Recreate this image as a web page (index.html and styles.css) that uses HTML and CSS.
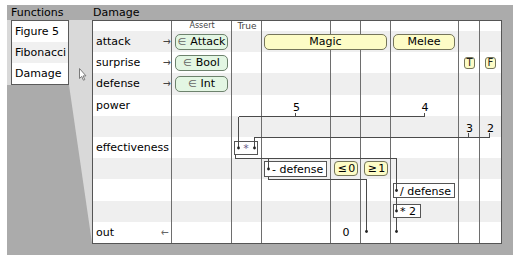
FILE: index.html
```html
<!DOCTYPE html>
<html lang="en">
<head>
  <meta charset="UTF-8">
  <title>Damage</title>
  <link rel="stylesheet" href="styles.css">
</head>
<body>
  <div class="stage">
    <div class="fn-panel">
      <div class="panel-title">Functions</div>
      <div class="fn-wrap">
        <div class="fn-list">
          <div class="fn-item">Figure 5</div>
          <div class="fn-item alt">Fibonacci</div>
          <div class="fn-item">Damage</div>
        </div>
      </div>
    </div>

    <!-- lens from the selected function to its table -->
    <svg class="lens" width="23" height="250" viewBox="0 0 23 250">
      <polygon points="0,15 23,15 23,238 0,80" fill="#d9d9d9"/>
      <path d="M10.5 63.5 V73.5 L12.7 71.4 L14.4 75.2 L15.8 74.6 L14.1 70.9 H17 Z" fill="#fff" stroke="#7a7a7a" stroke-linejoin="round"/>
    </svg>

    <div class="main-panel">
      <div class="panel-title">Damage</div>
      <div class="table-wrap">
        <div class="table">
          <div class="band alt r2"></div>
          <div class="band r3"></div>
          <div class="band alt r4"></div>
          <div class="band r5"></div>
          <div class="band alt r6"></div>
          <div class="band r7"></div>
          <div class="band alt r8"></div>
          <div class="band r9"></div>
          <div class="band alt r10"></div>
          <div class="band r11"></div>

          <div class="vline c1"></div>
          <div class="vline c2"></div>
          <div class="vline c3"></div>
          <div class="vline c4"></div>
          <div class="vline c5"></div>
          <div class="vline c6"></div>
          <div class="vline c7"></div>
          <div class="vline c8"></div>

          <div class="hdr r1 c2">Assert</div>
          <div class="hdr true r1 c3">True</div>

          <div class="label r2 c1"><span>attack</span><span class="arrow">→</span></div>
          <div class="label r3 c1"><span>surprise</span><span class="arrow">→</span></div>
          <div class="label r4 c1"><span>defense</span><span class="arrow">→</span></div>
          <div class="label r5 c1"><span>power</span></div>
          <div class="label r7 c1"><span>effectiveness</span></div>
          <div class="label r11 c1"><span>out</span><span class="arrow back">←</span></div>

          <div class="pill set r2 c2"><span class="in">∈</span>Attack</div>
          <div class="pill set r3 c2"><span class="in">∈</span>Bool</div>
          <div class="pill set r4 c2"><span class="in">∈</span>Int</div>

          <div class="pill case r2 c4-6">Magic</div>
          <div class="pill case r2 c7">Melee</div>
          <div class="chip r3 c8">T</div>
          <div class="chip r3 c9">F</div>

          <div class="num r5 c4">5</div>
          <div class="num r5 c7">4</div>
          <div class="num r6 c8">3</div>
          <div class="num r6 c9">2</div>

          <div class="pill case cond r8 c5">≤ 0</div>
          <div class="pill case cond r8 c6">≥ 1</div>

          <div class="num mid r11 c5">0</div>
        </div>

        <svg class="wires" width="410" height="224" viewBox="92 20 410 224">
          <g class="boxes">
            <rect x="234.5" y="141.5" width="23" height="13"/>
            <rect x="264.5" y="161.5" width="62" height="15"/>
            <rect x="393.5" y="183.5" width="61" height="14"/>
            <rect x="393.5" y="204.5" width="27" height="13"/>
          </g>
          <g class="lines">
            <path d="M238.5 116.5 H424.5 M295.5 113 V116.5 M424.5 113 V116.5 M238.5 116.5 V148"/>
            <path d="M254.5 148 V137.5 H489.5 M468.5 132.5 V137.5 M489.5 132.5 V137.5"/>
            <path d="M235.5 154.5 V158.5 H396.5 V190.5 M268.5 158.5 V169"/>
            <path d="M268.5 176.5 V179.5 H366.5 V231.5"/>
            <path d="M396.5 197.5 V211 M396.5 217.5 V231.5"/>
          </g>
          <g class="dots">
            <circle cx="238.5" cy="148" r="1.4"/>
            <circle cx="254.5" cy="148" r="1.4"/>
            <circle cx="268.5" cy="169" r="1.4"/>
            <circle cx="396.5" cy="190.5" r="1.4"/>
            <circle cx="396.5" cy="211" r="1.4"/>
            <circle cx="366.5" cy="231.5" r="1.4"/>
            <circle cx="396.5" cy="231.5" r="1.4"/>
          </g>
          <text class="op" x="246" y="152">*</text>
          <text class="box-text" x="272" y="173">- defense</text>
          <text class="box-text" x="400" y="194.5">/ defense</text>
          <text class="box-text" x="400" y="215">* 2</text>
        </svg>
      </div>
    </div>
  </div>
</body>
</html>
```

FILE: styles.css
```css
body{
  margin: 0;
  background: #fff;
  font-family: "DejaVu Sans", Verdana, sans-serif;
  font-size: 11px;
  color: #000;
}
.stage{
  display: flex;
  margin: 5px 0 0 7px;
  height: 250px;
  background: #ababab;
}
.panel-title{
  height: 15px;
  line-height: 16px;
  padding-left: 4px;
}
.fn-panel{
  width: 62px;
  flex: none;
}
.fn-wrap{
  background: #d9d9d9;
  padding-left: 4px;
}
.fn-list{
  border: 1px solid #5a5a5a;
  background: #fff;
}
.fn-item{
  height: 21px;
  line-height: 21px;
  padding-left: 3px;
}
.fn-item.alt{
  background: #f0f0f0;
}
.lens{
  display: block;
  flex: none;
}
.main-panel{
  width: 410px;
  flex: none;
}
.main-panel .panel-title{
  padding-left: 1px;
}
.table-wrap{
  position: relative;
}
.table{
  display: grid;
  grid-template-columns: 79px 60px 30px 69px 30px 30px 68px 21px 21px;
  grid-template-rows: 10px repeat(10, 21.2px);
  border: 1px solid #555;
  background: #fff;
}

/* grid placement */
.r1{grid-row: 1;}
.r2{grid-row: 2;}
.r3{grid-row: 3;}
.r4{grid-row: 4;}
.r5{grid-row: 5;}
.r6{grid-row: 6;}
.r7{grid-row: 7;}
.r8{grid-row: 8;}
.r9{grid-row: 9;}
.r10{grid-row: 10;}
.r11{grid-row: 11;}
.c1{grid-column: 1;}
.c2{grid-column: 2;}
.c3{grid-column: 3;}
.c4{grid-column: 4;}
.c5{grid-column: 5;}
.c6{grid-column: 6;}
.c7{grid-column: 7;}
.c8{grid-column: 8;}
.c9{grid-column: 9;}
.c4-6{grid-column: 4 / 7;}

.band{
  grid-column: 1 / -1;
}
.band.alt{
  background: #efefef;
}
.vline{
  grid-row: 1 / -1;
  border-right: 1px solid #6e6e6e;
}
.hdr{
  text-align: center;
  font-size: 8px;
  line-height: 10px;
  color: #444;
}
.hdr.true{
  font-size: 9px;
}
.label{
  display: flex;
  justify-content: space-between;
  align-items: center;
  padding: 0 1px 0 3px;
}
.arrow{
  font-size: 11px;
  color: #444;
  transform: scaleX(0.85);
}
.arrow.back{
  margin-right: 2px;
  color: #666;
}
.pill{
  align-self: center;
  height: 16px;
  box-sizing: border-box;
  border: 1px solid;
  border-radius: 5px;
  display: flex;
  align-items: center;
  justify-content: center;
}
.pill.set{
  margin: 0 4px 0 3px;
  background: #e3f6e3;
  border-color: #6d826d;
}
.pill.case{
  margin: 0 4px 0 2px;
  background: #fdfcc6;
  border-color: #75755a;
}
.pill.cond{
  justify-self: center;
  width: 24px;
  height: 15px;
  margin: 0;
  border-radius: 4px;
  letter-spacing: -1px;
}
.in{
  color: #666;
  font-size: 10px;
  margin-right: 4px;
}
.chip{
  justify-self: center;
  align-self: center;
  width: 11px;
  height: 12px;
  box-sizing: border-box;
  border: 1px solid #75755a;
  border-radius: 3px;
  background: #fdfcc6;
  font-size: 10px;
  line-height: 10px;
  text-align: center;
  color: #222;
}
.num{
  text-align: center;
  align-self: end;
  line-height: 13px;
  padding-bottom: 2px;
}
.num.mid{
  align-self: center;
  padding-bottom: 0;
}
.wires{
  position: absolute;
  left: 0;
  top: 0;
  pointer-events: none;
}
.boxes rect{
  fill: #fff;
  stroke: #555;
  shape-rendering: crispEdges;
}
.lines path{
  fill: none;
  stroke: #4a4a4a;
  shape-rendering: crispEdges;
}
.dots circle{
  fill: #222;
}
.op{
  font-size: 11px;
  fill: #6a5a8a;
  text-anchor: middle;
}
.box-text{
  font-size: 11px;
  fill: #000;
}
```
